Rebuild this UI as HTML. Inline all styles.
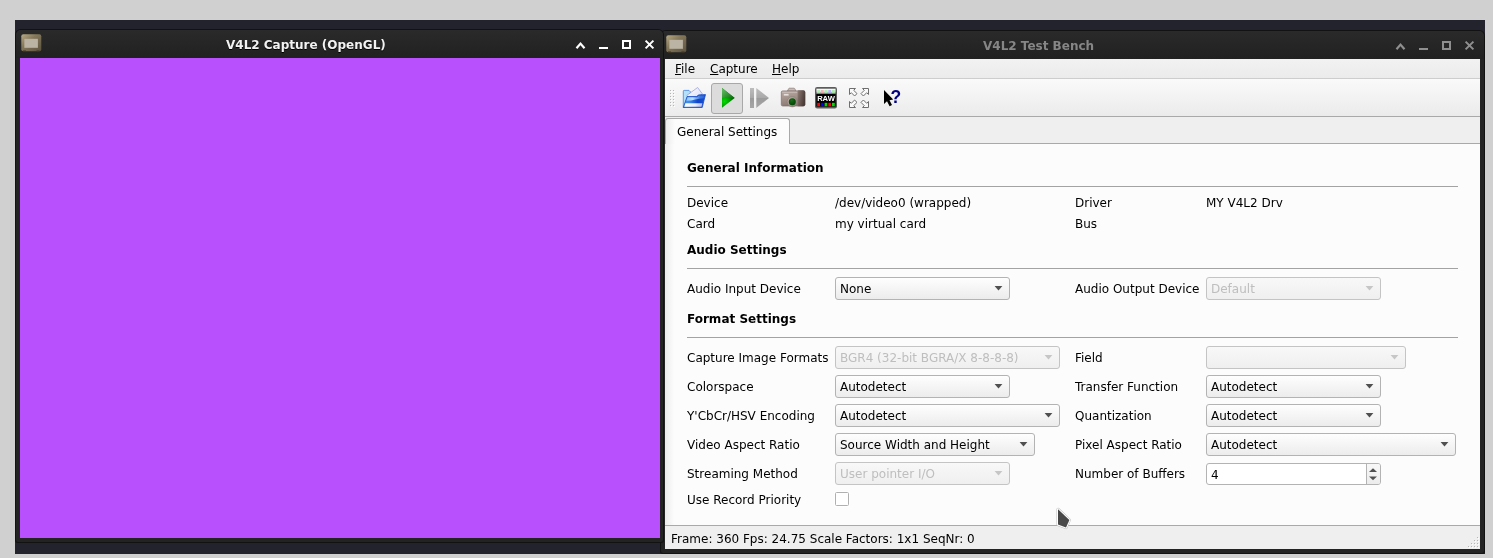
<!DOCTYPE html>
<html><head><meta charset="utf-8"><title>V4L2 Test Bench</title>
<style>
html,body{margin:0;padding:0}
body{width:1493px;height:558px;overflow:hidden;background:#d0d0d0;position:relative;font-family:"DejaVu Sans","Liberation Sans",sans-serif;font-size:12px;color:#000}
div,span,i,svg{position:absolute;box-sizing:border-box}
.t{white-space:nowrap;line-height:14px;height:14px}
.b{font-weight:bold}
.desk{left:15px;top:20px;width:1470px;height:534px;background:#23232e}
.win{background:#232323;box-shadow:inset 0 0 0 1px #121212}
.tb{left:1px;top:1px;right:1px;height:28px;background:linear-gradient(#2a2a2a,#212121)}
.title{font-weight:bold;color:#fff;white-space:nowrap;line-height:14px}
.hr{height:1px;background:#a3a3a3}
.combo{border:1px solid #b3b3b3;border-radius:3px;background:linear-gradient(#fefefe,#ececec)}
.combo span{left:4px;top:4px;line-height:14px;white-space:nowrap}
.combo svg{right:6px;top:7px;fill:#505050}
.combo.dis{border-color:#c4c4c4;background:linear-gradient(#f8f8f8,#efefef)}
.combo.dis span{color:#bebebe}
.combo.dis svg{fill:#c6c6c6}
u{text-decoration:underline;text-underline-offset:1px}
</style></head><body>
<div id="root" style="left:0;top:0;width:1493px;height:558px;will-change:transform">
<div class="desk"></div>

<div class="win" style="left:660px;top:30px;width:825px;height:524px;border-radius:6px 6px 3px 3px">
<div class="tb" style="border-radius:5px 5px 0 0"></div>
</div>

<div class="win" style="left:15px;top:29px;width:649px;height:514px;border-radius:6px 6px 3px 3px">
<div class="tb" style="border-radius:5px 5px 0 0"></div>
<div style="left:5px;top:29px;width:640px;height:480px;background:#b950fd"></div>
</div>

<div class="title" style="left:226px;top:38px;color:#f2f2f2;text-shadow:0 1px 0 #000">V4L2 Capture (OpenGL)</div>
<div class="title" style="left:983px;top:39px;color:#868686">V4L2 Test Bench</div>
<svg style="left:0px;top:0px" width="1493" height="558" viewBox="0 0 1493 558" fill="none" stroke="#ffffff" stroke-width="2"><path d="M576.5 48.2 L580.5 43.6 L584.5 48.2" stroke-width="2.2"/><path d="M599 48 H608"/><rect x="623" y="41" width="7" height="7"/><path d="M645.6 40.6 L653.4 48.4 M653.4 40.6 L645.6 48.4"/></svg>
<svg style="left:820px;top:1px" width="1493" height="558" viewBox="0 0 1493 558" fill="none" stroke="#8f8f8f" stroke-width="2"><path d="M576.5 48.2 L580.5 43.6 L584.5 48.2" stroke-width="2.2"/><path d="M599 48 H608"/><rect x="623" y="41" width="7" height="7"/><path d="M645.6 40.6 L653.4 48.4 M653.4 40.6 L645.6 48.4"/></svg>
<svg style="left:21px;top:34px" width="21" height="19" viewBox="0 0 21 19"><defs><linearGradient id="wi" x1="0" y1="0" x2="1" y2="1"><stop offset="0" stop-color="#b8aa84"/><stop offset=".4" stop-color="#84785a"/><stop offset="1" stop-color="#5c523f"/></linearGradient></defs><rect x="0.3" y="0.3" width="20" height="17" rx="2" fill="url(#wi)"/><rect x="2" y="16.5" width="3" height="1.6" fill="#3a3324"/><rect x="15.5" y="16.5" width="3" height="1.6" fill="#3a3324"/><rect x="3.3" y="4.8" width="13.6" height="9" fill="#bbb3a3"/></svg>
<svg style="left:666px;top:35px" width="21" height="19" viewBox="0 0 21 19"><defs><linearGradient id="wi" x1="0" y1="0" x2="1" y2="1"><stop offset="0" stop-color="#b8aa84"/><stop offset=".4" stop-color="#84785a"/><stop offset="1" stop-color="#5c523f"/></linearGradient></defs><rect x="0.3" y="0.3" width="20" height="17" rx="2" fill="url(#wi)"/><rect x="2" y="16.5" width="3" height="1.6" fill="#3a3324"/><rect x="15.5" y="16.5" width="3" height="1.6" fill="#3a3324"/><rect x="3.3" y="4.8" width="13.6" height="9" fill="#bbb3a3"/></svg>
<div style="left:665px;top:59px;width:815px;height:490px;background:#efefef"></div>
<div style="left:665px;top:59px;width:815px;height:19px;background:linear-gradient(#f2f2f2,#ebebeb)"></div>
<div class="t " style="left:675px;top:62px"><u>F</u>ile</div>
<div class="t " style="left:710px;top:62px"><u>C</u>apture</div>
<div class="t " style="left:772px;top:62px"><u>H</u>elp</div>
<div style="left:665px;top:78px;width:815px;height:1px;background:#cdcdcd"></div>
<div style="left:665px;top:79px;width:815px;height:37px;background:linear-gradient(#fafafa,#ebebeb)"></div>
<div style="left:665px;top:116px;width:815px;height:1px;background:#a9a9a9"></div>
<div style="left:711px;top:83px;width:32px;height:31px;border:1px solid #a8a8a8;border-radius:3px;background:#dcdcdc"></div>
<div style="left:665px;top:143px;width:815px;height:383px;background:linear-gradient(90deg,#ececec,#fcfcfc 9px);border-top:1px solid #a9a9a9;border-bottom:1px solid #a9a9a9"></div>
<div style="left:665px;top:118px;width:125px;height:26px;background:linear-gradient(90deg,#ececec,#fcfcfc 9px);border:1px solid #a9a9a9;border-bottom:none;border-radius:3px 3px 0 0"></div>
<div class="t " style="left:677px;top:125px">General Settings</div>
<div class="t " style="left:671px;top:532px">Frame: 360 Fps: 24.75 Scale Factors: 1x1 SeqNr: 0</div>
<div class="t b" style="left:687px;top:161px">General Information</div>
<div class="hr" style="left:687px;top:186px;width:771px"></div>
<div class="t " style="left:687px;top:196px">Device</div>
<div class="t " style="left:835px;top:196px">/dev/video0 (wrapped)</div>
<div class="t " style="left:1075px;top:196px">Driver</div>
<div class="t " style="left:1206px;top:196px">MY V4L2 Drv</div>
<div class="t " style="left:687px;top:217px">Card</div>
<div class="t " style="left:835px;top:217px">my virtual card</div>
<div class="t " style="left:1075px;top:217px">Bus</div>
<div class="t b" style="left:687px;top:243px">Audio Settings</div>
<div class="hr" style="left:687px;top:268px;width:771px"></div>
<div class="t " style="left:687px;top:282px">Audio Input Device</div>
<div class="combo" style="left:835px;top:277px;width:175px;height:23px"><span>None</span><svg width="9" height="6" viewBox="0 0 9 6"><path d="M0.6 0.9 H8.4 L4.5 5.5 Z"/></svg></div>
<div class="t " style="left:1075px;top:282px">Audio Output Device</div>
<div class="combo dis" style="left:1206px;top:277px;width:175px;height:23px"><span>Default</span><svg width="9" height="6" viewBox="0 0 9 6"><path d="M0.6 0.9 H8.4 L4.5 5.5 Z"/></svg></div>
<div class="t b" style="left:687px;top:312px">Format Settings</div>
<div class="hr" style="left:687px;top:337px;width:771px"></div>
<div class="t " style="left:687px;top:351px">Capture Image Formats</div>
<div class="combo dis" style="left:835px;top:346px;width:225px;height:23px"><span>BGR4 (32-bit BGRA/X 8-8-8-8)</span><svg width="9" height="6" viewBox="0 0 9 6"><path d="M0.6 0.9 H8.4 L4.5 5.5 Z"/></svg></div>
<div class="t " style="left:1075px;top:351px">Field</div>
<div class="combo dis" style="left:1206px;top:346px;width:200px;height:23px"><span></span><svg width="9" height="6" viewBox="0 0 9 6"><path d="M0.6 0.9 H8.4 L4.5 5.5 Z"/></svg></div>
<div class="t " style="left:687px;top:380px">Colorspace</div>
<div class="combo" style="left:835px;top:375px;width:175px;height:23px"><span>Autodetect</span><svg width="9" height="6" viewBox="0 0 9 6"><path d="M0.6 0.9 H8.4 L4.5 5.5 Z"/></svg></div>
<div class="t " style="left:1075px;top:380px">Transfer Function</div>
<div class="combo" style="left:1206px;top:375px;width:175px;height:23px"><span>Autodetect</span><svg width="9" height="6" viewBox="0 0 9 6"><path d="M0.6 0.9 H8.4 L4.5 5.5 Z"/></svg></div>
<div class="t " style="left:687px;top:409px">Y'CbCr/HSV Encoding</div>
<div class="combo" style="left:835px;top:404px;width:225px;height:23px"><span>Autodetect</span><svg width="9" height="6" viewBox="0 0 9 6"><path d="M0.6 0.9 H8.4 L4.5 5.5 Z"/></svg></div>
<div class="t " style="left:1075px;top:409px">Quantization</div>
<div class="combo" style="left:1206px;top:404px;width:175px;height:23px"><span>Autodetect</span><svg width="9" height="6" viewBox="0 0 9 6"><path d="M0.6 0.9 H8.4 L4.5 5.5 Z"/></svg></div>
<div class="t " style="left:687px;top:438px">Video Aspect Ratio</div>
<div class="combo" style="left:835px;top:433px;width:200px;height:23px"><span>Source Width and Height</span><svg width="9" height="6" viewBox="0 0 9 6"><path d="M0.6 0.9 H8.4 L4.5 5.5 Z"/></svg></div>
<div class="t " style="left:1075px;top:438px">Pixel Aspect Ratio</div>
<div class="combo" style="left:1206px;top:433px;width:250px;height:23px"><span>Autodetect</span><svg width="9" height="6" viewBox="0 0 9 6"><path d="M0.6 0.9 H8.4 L4.5 5.5 Z"/></svg></div>
<div class="t " style="left:687px;top:467px">Streaming Method</div>
<div class="combo dis" style="left:835px;top:462px;width:175px;height:23px"><span>User pointer I/O</span><svg width="9" height="6" viewBox="0 0 9 6"><path d="M0.6 0.9 H8.4 L4.5 5.5 Z"/></svg></div>
<div class="t " style="left:1075px;top:467px">Number of Buffers</div>
<div style="left:1206px;top:463px;width:175px;height:22px;border:1px solid #b3b3b3;border-radius:3px;background:#fff;overflow:hidden"><span style="left:4px;top:4px;line-height:14px">4</span><div style="right:0;top:0;width:14px;height:20px;border-left:1px solid #b3b3b3;background:linear-gradient(#f8f8f8,#ececec)"></div><svg style="right:2px;top:4px" width="10" height="14" viewBox="0 0 10 14" fill="#505050"><path d="M1 4 H9 L5 0.2 Z"/><path d="M1 8.5 H9 L5 12.3 Z"/></svg></div>
<div class="t " style="left:687px;top:493px">Use Record Priority</div>
<div style="left:835px;top:492px;width:14px;height:14px;border:1px solid #b0b0b0;border-radius:1.5px;background:#fff;box-shadow:0 0 0 1px #fff"></div>
<svg style="left:0;top:0" width="1493" height="558" viewBox="0 0 1493 558">
<defs>
<linearGradient id="fb" x1="0" y1="0" x2="1" y2="0"><stop offset="0" stop-color="#6fb4f5"/><stop offset="1" stop-color="#bfe0fb"/></linearGradient>
<linearGradient id="ff" x1="0" y1="0" x2="1" y2="0"><stop offset="0" stop-color="#4c94ec"/><stop offset=".3" stop-color="#3f86e8"/><stop offset=".65" stop-color="#0f44cc"/><stop offset="1" stop-color="#1a50d0"/></linearGradient><linearGradient id="fh" x1="0" y1="0" x2="1" y2="0"><stop offset="0" stop-color="#8cc4f8"/><stop offset=".35" stop-color="#b8e0fc"/><stop offset=".75" stop-color="#3f78e0"/><stop offset="1" stop-color="#2f64d8"/></linearGradient><linearGradient id="fw" x1="0" y1="0" x2="1" y2="0"><stop offset="0" stop-color="#ffffff"/><stop offset=".6" stop-color="#ececf8"/><stop offset="1" stop-color="#b4b8e4"/></linearGradient>
<linearGradient id="fp" x1="0" y1="0" x2="1" y2="1"><stop offset="0" stop-color="#ffffff"/><stop offset="1" stop-color="#d6d8f4"/></linearGradient>
<linearGradient id="pg1" x1="0" y1="0" x2="1" y2="1"><stop offset="0" stop-color="#6cc06c"/><stop offset=".5" stop-color="#3a9a3a"/><stop offset="1" stop-color="#0c640c"/></linearGradient>
<radialGradient id="pg2" gradientUnits="userSpaceOnUse" cx="724.5" cy="101.5" r="9"><stop offset="0" stop-color="#00dc00"/><stop offset=".5" stop-color="#00a800"/><stop offset="1" stop-color="#006800"/></radialGradient>
<linearGradient id="sg" x1="0" y1="0" x2="0" y2="1"><stop offset="0" stop-color="#bdbdbd"/><stop offset=".5" stop-color="#a8a8a8"/><stop offset=".5" stop-color="#9a9a9a"/><stop offset="1" stop-color="#a6a6a6"/></linearGradient>
<linearGradient id="cb" x1="0" y1="0" x2=".3" y2="1"><stop offset="0" stop-color="#bcaca6"/><stop offset=".5" stop-color="#a3928c"/><stop offset="1" stop-color="#8b7a74"/></linearGradient><linearGradient id="rw" x1="0" y1="0" x2="0" y2="1"><stop offset="0" stop-color="#ffffff"/><stop offset=".55" stop-color="#e2e2e2"/><stop offset="1" stop-color="#6a6a6a"/></linearGradient><linearGradient id="cr" x1="0" y1="0" x2="1" y2="1"><stop offset="0" stop-color="#c2b4ae"/><stop offset="1" stop-color="#86756f"/></linearGradient>
<linearGradient id="cg" x1="0" y1="0" x2="1" y2=".4"><stop offset="0" stop-color="#8e7c76"/><stop offset=".6" stop-color="#65544f"/><stop offset="1" stop-color="#4a3b38"/></linearGradient>
<radialGradient id="cl" cx=".4" cy=".3" r=".75"><stop offset="0" stop-color="#1e6e1e"/><stop offset=".5" stop-color="#0b560b"/><stop offset="1" stop-color="#064206"/></radialGradient>
</defs>
<!-- handle dots -->
<g fill="#b4b4b4"><rect x="670" y="90" width="1" height="1"/><rect x="670" y="93" width="1" height="1"/><rect x="670" y="96" width="1" height="1"/><rect x="670" y="99" width="1" height="1"/><rect x="670" y="102" width="1" height="1"/><rect x="670" y="105" width="1" height="1"/><rect x="673" y="90" width="1" height="1"/><rect x="673" y="93" width="1" height="1"/><rect x="673" y="96" width="1" height="1"/><rect x="673" y="99" width="1" height="1"/><rect x="673" y="102" width="1" height="1"/><rect x="673" y="105" width="1" height="1"/></g>
<g fill="#ffffff"><rect x="671" y="91" width="1" height="1"/><rect x="671" y="94" width="1" height="1"/><rect x="671" y="97" width="1" height="1"/><rect x="671" y="100" width="1" height="1"/><rect x="671" y="103" width="1" height="1"/><rect x="671" y="106" width="1" height="1"/><rect x="674" y="91" width="1" height="1"/><rect x="674" y="94" width="1" height="1"/><rect x="674" y="97" width="1" height="1"/><rect x="674" y="100" width="1" height="1"/><rect x="674" y="103" width="1" height="1"/><rect x="674" y="106" width="1" height="1"/></g>
<!-- open folder -->
<path d="M683.3 107.4 V91.2 Q683.3 90.4 684.1 90.4 H689 L690.6 92 L688 98 L685 107.4 Z" fill="#b4e0fb" stroke="#3f83e2" stroke-width=".8"/>
<path d="M686.9 95.4 L697.6 87.5 L702.3 93.8 L699 96.5 L690 101 Z" fill="url(#fp)" stroke="#9298d6" stroke-width=".7"/>
<path d="M687.1 96.5 H696.8 L698.4 94.9 L705.5 94.6 L702.2 107.5 H683.3 Z" fill="url(#ff)" stroke="#1a4cc4" stroke-width=".8" stroke-linejoin="round"/>
<path d="M687.6 97.2 H697 L698.8 95.6 L704.4 95.4 L703.6 98.2 C698 98.6 693 100.6 686.4 100.8 Z" fill="url(#fh)"/>
<path d="M685.4 103.2 H702.4 L701.5 106.7 H684.4 Z" fill="url(#fw)"/>
<!-- play -->
<path d="M722 88 L734.7 97.9 L722 107.8 Z" fill="url(#pg2)"/>
<path d="M722 88 L734.7 97.9 L722 97.9 Z" fill="url(#pg1)"/>
<!-- step -->
<rect x="750" y="88" width="4" height="20" fill="url(#sg)"/>
<path d="M756.3 88 L769 97.9 L756.3 107.9 Z" fill="url(#sg)"/>
<!-- camera -->
<path d="M787.3 91.2 L788.7 88.6 Q788.9 88.2 789.4 88.2 H794 Q794.5 88.2 794.7 88.6 L796.1 91.2 Z" fill="#c9bcb7" stroke="#8a7a74" stroke-width=".7"/>
<rect x="781.3" y="90.9" width="23.6" height="15.1" rx="1.4" fill="url(#cb)" stroke="#7f6f69" stroke-width=".7"/>
<path d="M797.6 90.2 H803.2 Q805.2 90.2 805.2 92 V104.4 Q805.2 106.2 803.2 106.2 H797.6 Z" fill="url(#cg)"/>
<rect x="782.2" y="91.8" width="15" height="1" fill="#d4c8c3" opacity=".7"/>
<rect x="783.8" y="93.9" width="4.8" height="1.7" fill="#e6dfdb"/>
<circle cx="792.3" cy="101.8" r="5.1" fill="url(#cr)" stroke="#85746e" stroke-width=".5"/>
<circle cx="792.3" cy="101.8" r="3.5" fill="url(#cl)"/>
<!-- RAW -->
<rect x="815" y="87.1" width="22" height="21.4" rx="2.2" fill="#5c5c5c"/>
<rect x="816.3" y="88.6" width="19.4" height="18" fill="#000"/>
<rect x="816.3" y="88.6" width="19.4" height="5.4" fill="url(#rw)"/>
<g opacity=".8"><rect x="817.2" y="90" width="2.8" height="3" fill="#a4f0a4"/><rect x="820.9" y="90" width="2.8" height="3" fill="#f9a8a8"/><rect x="824.6" y="90" width="2.8" height="3" fill="#a4f0a4"/><rect x="828.3" y="90" width="2.8" height="3" fill="#a8a8f9"/><rect x="832" y="90" width="2.8" height="3" fill="#a4f0a4"/></g>
<rect x="817.2" y="102.8" width="2.8" height="3.4" fill="#f00"/><rect x="820.9" y="102.8" width="2.8" height="3.4" fill="#00f"/><rect x="824.6" y="102.8" width="2.8" height="3.4" fill="#0d0"/><rect x="828.3" y="102.8" width="2.8" height="3.4" fill="#f00"/><rect x="832" y="102.8" width="2.8" height="3.4" fill="#0d0"/>
<text x="826" y="101" text-anchor="middle" font-family="Liberation Sans, sans-serif" font-weight="bold" font-size="7.6" fill="#fff">RAW</text>
<!-- fullscreen arrows -->
<g fill="#fafafa" stroke="#6e6e6e" stroke-width="1" stroke-linejoin="miter">
<path d="M849.5 88.5 H855.5 L853.7 90.3 L857 93.6 L854.6 96 L851.3 92.7 L849.5 94.5 Z"/>
<path d="M849.5 88.5 H855.5 L853.7 90.3 L857 93.6 L854.6 96 L851.3 92.7 L849.5 94.5 Z" transform="translate(1718 0) scale(-1 1)"/>
<path d="M849.5 88.5 H855.5 L853.7 90.3 L857 93.6 L854.6 96 L851.3 92.7 L849.5 94.5 Z" transform="translate(0 196) scale(1 -1)"/>
<path d="M849.5 88.5 H855.5 L853.7 90.3 L857 93.6 L854.6 96 L851.3 92.7 L849.5 94.5 Z" transform="translate(1718 196) scale(-1 -1)"/>
</g>
<!-- whats this -->
<path d="M884 90 V104 L887 101.2 L889.6 106.2 L892 105 L889.5 100.2 L893.2 99.6 Z" fill="#000"/>
<text x="895.8" y="102.8" text-anchor="middle" font-family="Liberation Sans, sans-serif" font-weight="bold" font-size="17.5" fill="#000080">?</text>
<!-- size grip -->
<g fill="#b6b6b6"><rect x="1477" y="537" width="1" height="1"/><rect x="1477" y="540" width="1" height="1"/><rect x="1474" y="540" width="1" height="1"/><rect x="1477" y="543" width="1" height="1"/><rect x="1474" y="543" width="1" height="1"/><rect x="1471" y="543" width="1" height="1"/><rect x="1477" y="546" width="1" height="1"/><rect x="1474" y="546" width="1" height="1"/><rect x="1471" y="546" width="1" height="1"/><rect x="1468" y="546" width="1" height="1"/></g>
<g fill="#ffffff"><rect x="1478" y="538" width="1" height="1"/><rect x="1478" y="541" width="1" height="1"/><rect x="1475" y="541" width="1" height="1"/><rect x="1478" y="544" width="1" height="1"/><rect x="1475" y="544" width="1" height="1"/><rect x="1472" y="544" width="1" height="1"/><rect x="1478" y="547" width="1" height="1"/><rect x="1475" y="547" width="1" height="1"/><rect x="1472" y="547" width="1" height="1"/><rect x="1469" y="547" width="1" height="1"/></g>
<!-- mouse cursor fragment -->
<path d="M1058 509.2 L1069.4 520 L1066 527.6 L1058 524.6 Z" fill="#484848" stroke="#bdbdbd" stroke-width="3" stroke-linejoin="round"/>
<path d="M1058 509.2 L1069.4 520 L1066 527.6 L1058 524.6 Z" fill="#484848" stroke="#fff" stroke-width="2" stroke-linejoin="round"/>
<path d="M1058 509.2 L1069.4 520 L1066 527.6 L1058 524.6 Z" fill="#484848"/>
</svg>
</div></body></html>
